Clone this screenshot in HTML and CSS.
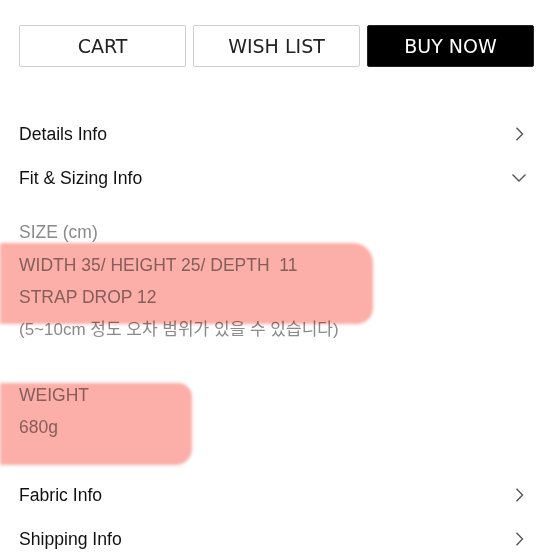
FILE: index.html
```html
<!DOCTYPE html>
<html lang="ko">
<head>
<meta charset="utf-8">
<link rel="stylesheet" href="styles.css">
</head>
<body>
<div class="page">
  <div class="actions">
    <button class="btn">CART</button>
    <button class="btn">WISH LIST</button>
    <button class="btn btn-dark">BUY NOW</button>
  </div>

  <div class="menu menu-top">
    <div class="row"><span>Details Info</span>
      <svg class="chev" width="14" height="14" viewBox="0 0 14 14"><path d="M4.5 0.8 L10.5 7 L4.5 13.2" fill="none" stroke="#555" stroke-width="1.4"/></svg>
    </div>
    <div class="row"><span>Fit &amp; Sizing Info</span>
      <svg class="chev" width="14" height="14" viewBox="0 0 14 14"><path d="M0.5 3.5 L7 10 L13.5 3.5" fill="none" stroke="#555" stroke-width="1.4"/></svg>
    </div>
  </div>

  <div class="size-info">
    <div class="blob blob-1"></div>
    <div class="blob blob-2"></div>
    <p class="line">SIZE (cm)</p>
    <p class="line">WIDTH 35/ HEIGHT 25/ DEPTH &nbsp;11</p>
    <p class="line">STRAP DROP 12</p>
    <p class="line ko">(5~10cm 정도 오차 범위가 있을 수 있습니다)</p>
    <p class="line">&nbsp;</p>
    <p class="line">WEIGHT</p>
    <p class="line">680g</p>
  </div>

  <div class="menu">
    <div class="row"><span>Fabric Info</span>
      <svg class="chev" width="14" height="14" viewBox="0 0 14 14"><path d="M4.5 0.8 L10.5 7 L4.5 13.2" fill="none" stroke="#555" stroke-width="1.4"/></svg>
    </div>
    <div class="row"><span>Shipping Info</span>
      <svg class="chev" width="14" height="14" viewBox="0 0 14 14"><path d="M4.5 0.8 L10.5 7 L4.5 13.2" fill="none" stroke="#555" stroke-width="1.4"/></svg>
    </div>
  </div>
</div>
</body>
</html>
```

FILE: styles.css
```css
* { box-sizing: border-box; }
html, body { margin: 0; padding: 0; background: #fff; }
body {
  font-family: "Liberation Sans", Arial, "Noto Sans CJK KR", sans-serif;
  width: 554px;
  height: 554px;
  overflow: hidden;
}
.page { display: flex; flex-direction: column; }

.actions {
  display: flex;
  gap: 7px;
  padding: 25px 20px 0 19px;
}
.btn {
  flex: 1;
  height: 42px;
  border: 1px solid #cfcfcf;
  border-radius: 2px;
  background: #fff;
  color: #222;
  font-family: "DejaVu Sans", Verdana, sans-serif;
  font-size: 19px;
  padding: 0;
  margin: 0;
}
.btn-dark {
  background: #000;
  border-color: #222;
  color: #fff;
}

.menu { display: flex; flex-direction: column; padding: 0 19px; }
.menu-top { margin-top: 45px; }
.row {
  display: flex;
  align-items: center;
  justify-content: space-between;
  height: 44px;
  font-size: 17.6px;
  color: #111;
  padding-right: 9px;
}
.row span { line-height: 44px; }
.chev { display: block; }

.size-info {
  position: relative;
  padding: 16px 19px 29px;
}
.line {
  position: relative;
  margin: 0;
  font-size: 17.5px;
  line-height: 32.5px;
  color: #8a8a8a;
  white-space: nowrap;
}
.ko { font-size: 17px; }

.blob {
  position: absolute;
  left: 0;
  background: #fcaea8;
  mix-blend-mode: multiply;
  filter: blur(1.5px);
  z-index: 1;
}
.blob-1 {
  top: 43px;
  width: 373px;
  height: 81px;
  border-radius: 0 20px 16px 0;
}
.blob-2 {
  top: 183px;
  width: 192px;
  height: 82px;
  border-radius: 0 14px 16px 0;
}
```
